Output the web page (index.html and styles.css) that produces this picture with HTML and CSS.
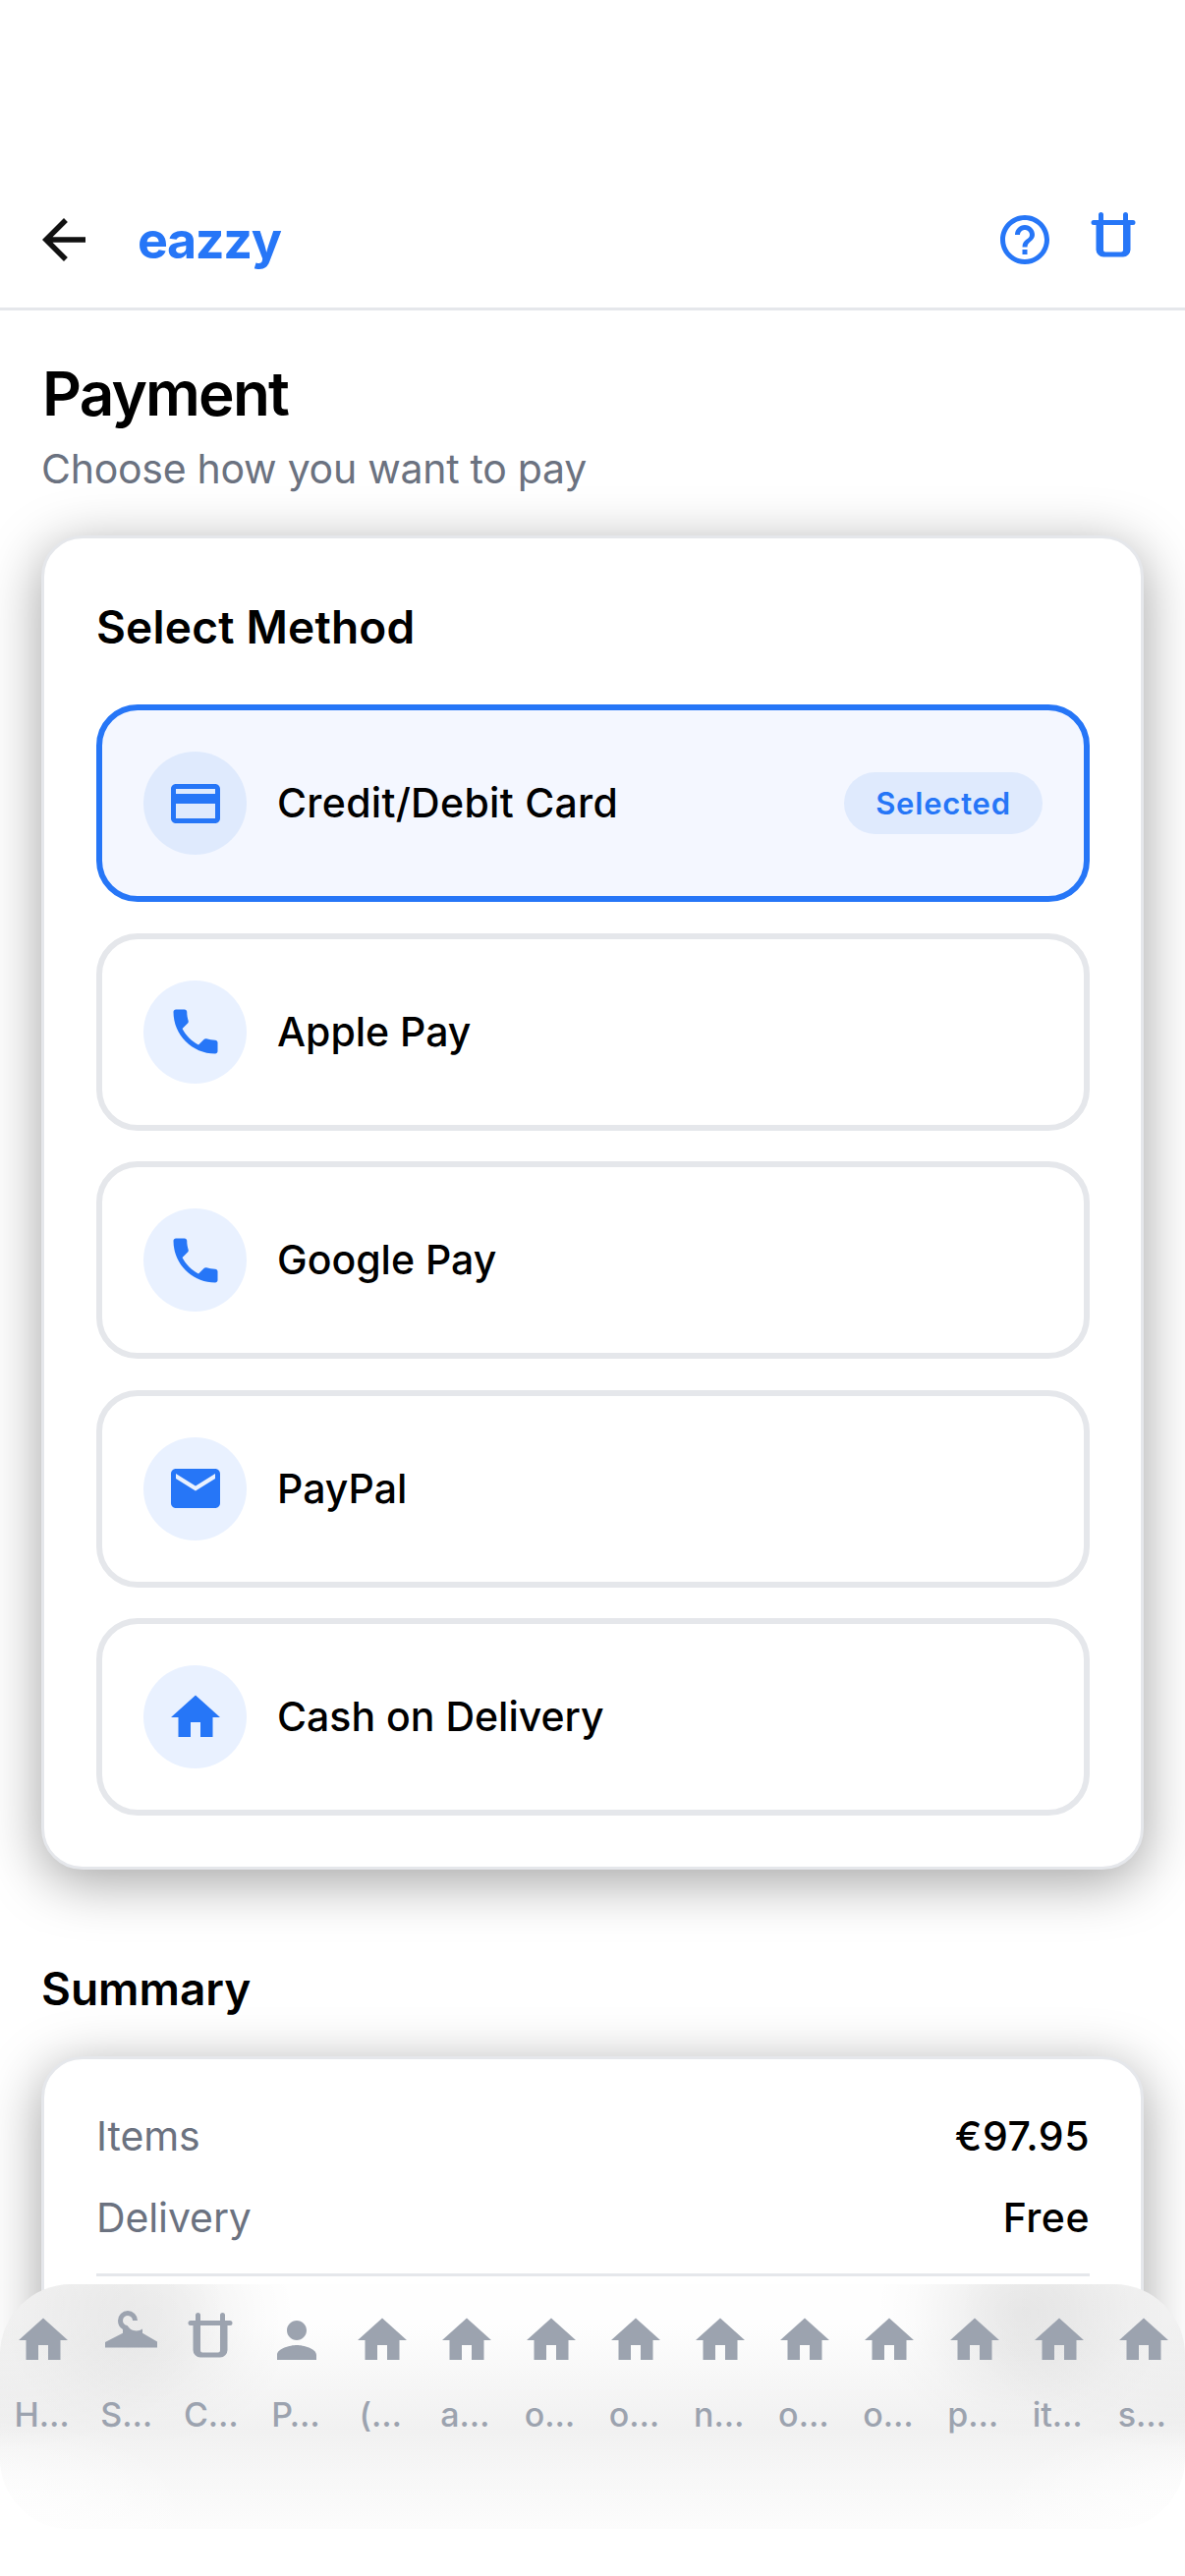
FILE: index.html
```html
<!DOCTYPE html>
<html lang="en">
<head>
<meta charset="utf-8">
<title>Payment – eazzy</title>
<link rel="stylesheet" href="styles.css">
</head>
<body>
<svg class="sprite" aria-hidden="true">
  <symbol id="home" viewBox="0 0 24 24"><path d="M10 20v-6h4v6h5v-8h3L12 3 2 12h3v8z"/></symbol>
  <symbol id="phone" viewBox="0 0 24 24"><path d="M6.62 10.79c1.44 2.83 3.76 5.14 6.59 6.59l2.2-2.2c.27-.27.67-.36 1.02-.24 1.12.37 2.33.57 3.57.57.55 0 1 .45 1 1V20c0 .55-.45 1-1 1-9.39 0-17-7.61-17-17 0-.55.45-1 1-1h3.5c.55 0 1 .45 1 1 0 1.25.2 2.45.57 3.57.11.35.03.74-.25 1.02l-2.2 2.2z"/></symbol>
  <symbol id="mail" viewBox="0 0 24 24"><path d="M20 4H4c-1.1 0-1.99.9-1.99 2L2 18c0 1.1.9 2 2 2h16c1.1 0 2-.9 2-2V6c0-1.1-.9-2-2-2zm0 4l-8 5-8-5V6l8 5 8-5v2z"/></symbol>
  <symbol id="card" viewBox="0 0 24 24"><path d="M20 4H4c-1.11 0-1.99.89-1.99 2L2 18c0 1.11.89 2 2 2h16c1.11 0 2-.89 2-2V6c0-1.11-.89-2-2-2zm0 14H4v-6h16v6zm0-10H4V6h16v2z"/></symbol>
  <symbol id="person" viewBox="0 0 24 24"><path d="M12 12c2.21 0 4-1.79 4-4s-1.79-4-4-4-4 1.79-4 4 1.79 4 4 4zm0 2c-2.67 0-8 1.34-8 4v2h16v-2c0-2.66-5.33-4-8-4z"/></symbol>
  <symbol id="help" viewBox="0 0 24 24"><path d="M11 18h2v-2h-2v2zm1-16C6.48 2 2 6.48 2 12s4.480 10 10 10 10-4.480 10-10S17.520 2 12 2zm0 18c-4.410 0-8-3.590-8-8s3.590-8 8-8 8 3.590 8 8-3.590 8-8 8zm0-14c-2.210 0-4 1.790-4 4h2c0-1.100.9-2 2-2s2 .9 2 2c0 2-3 1.750-3 5h2c0-2.250 3-2.500 3-5 0-2.210-1.790-4-4-4z"/></symbol>
  <symbol id="back" viewBox="0 0 24 24"><path d="M20 11H7.83l5.59-5.59L12 4l-8 8 8 8 1.41-1.41L7.83 13H20v-2z"/></symbol>
  <symbol id="bag" viewBox="0 0 60 60"><path fill-rule="evenodd" d="M15 4.500a2.500 2.500 0 0 1 5 0V10H40V4.500a2.500 2.500 0 0 1 5 0V10H50a2.500 2.500 0 0 1 0 5H47.500V40a7.500 7.500 0 0 1-7.500 7.500H20a7.500 7.500 0 0 1-7.500-7.500V15H10a2.500 2.500 0 0 1 0-5H15zM20 15V40.500a2 2 0 0 0 2 2H38a2 2 0 0 0 2-2V15z"/></symbol>
  <symbol id="hanger" viewBox="0 0 60 60"><path d="M7 37.500V32L25 22.700V19C21.500 17 20 14 20 10A10 10 0 0 1 40 10H35A5 5 0 1 0 29.500 15C31.500 18 34 20 37 20.300C40 20.600 43 20 45 18.500V22.700L60 31.500V37.500z"/></symbol>
</svg>

<div class="screen">
  <header class="topbar">
    <svg class="back"><use href="#back"/></svg>
    <span class="brand">eazzy</span>
    <div class="actions">
      <svg class="icon"><use href="#help"/></svg>
      <svg class="icon"><use href="#bag"/></svg>
    </div>
  </header>

  <main class="content">
    <h1 class="title">Payment</h1>
    <p class="subtitle">Choose how you want to pay</p>

    <section class="panel methods">
      <h2 class="heading">Select Method</h2>
      <div class="list">
        <div class="method selected">
          <span class="bubble"><svg class="icon"><use href="#card"/></svg></span>
          <span class="name">Credit/Debit Card</span>
          <span class="badge">Selected</span>
        </div>
        <div class="method">
          <span class="bubble"><svg class="icon"><use href="#phone"/></svg></span>
          <span class="name">Apple Pay</span>
        </div>
        <div class="method">
          <span class="bubble"><svg class="icon"><use href="#phone"/></svg></span>
          <span class="name">Google Pay</span>
        </div>
        <div class="method">
          <span class="bubble"><svg class="icon"><use href="#mail"/></svg></span>
          <span class="name">PayPal</span>
        </div>
        <div class="method">
          <span class="bubble"><svg class="icon"><use href="#home"/></svg></span>
          <span class="name">Cash on Delivery</span>
        </div>
      </div>
    </section>

    <h2 class="heading summary-title">Summary</h2>
    <section class="panel summary">
      <div class="line"><span class="label">Items</span><span class="value">€97.95</span></div>
      <div class="line"><span class="label">Delivery</span><span class="value">Free</span></div>
      <hr class="rule">
    </section>
  </main>

  <nav class="tabs">
    <div class="tab"><svg class="icon"><use href="#home"/></svg><span>H…</span></div>
    <div class="tab"><svg class="icon"><use href="#hanger"/></svg><span>S…</span></div>
    <div class="tab"><svg class="icon bag"><use href="#bag"/></svg><span>C…</span></div>
    <div class="tab"><svg class="icon"><use href="#person"/></svg><span>P…</span></div>
    <div class="tab"><svg class="icon"><use href="#home"/></svg><span>(…</span></div>
    <div class="tab"><svg class="icon"><use href="#home"/></svg><span>a…</span></div>
    <div class="tab"><svg class="icon"><use href="#home"/></svg><span>o…</span></div>
    <div class="tab"><svg class="icon"><use href="#home"/></svg><span>o…</span></div>
    <div class="tab"><svg class="icon"><use href="#home"/></svg><span>n…</span></div>
    <div class="tab"><svg class="icon"><use href="#home"/></svg><span>o…</span></div>
    <div class="tab"><svg class="icon"><use href="#home"/></svg><span>o…</span></div>
    <div class="tab"><svg class="icon"><use href="#home"/></svg><span>p…</span></div>
    <div class="tab"><svg class="icon"><use href="#home"/></svg><span>it…</span></div>
    <div class="tab"><svg class="icon"><use href="#home"/></svg><span>s…</span></div>
  </nav>
</div>
</body>
</html>
```
FILE: styles.css
```css
* { box-sizing: border-box; margin: 0; padding: 0; }

body {
  background: #fff;
  color: #000;
  font-family: Inter, "Liberation Sans", sans-serif;
}

svg { fill: currentColor; display: block; flex: none; }
.sprite { position: absolute; width: 0; height: 0; }
.icon { width: 60px; height: 60px; }

.screen {
  position: relative;
  width: 1206px;
  height: 2622px;
  overflow: hidden;
  display: flex;
  flex-direction: column;
}

/* Header */
.topbar {
  flex: none;
  height: 316px;
  padding: 175px 43px 0 32px;
  border-bottom: 3px solid #e5e7eb;
  display: flex;
  align-items: center;
  color: #2676f7;
}
.back { width: 66px; height: 66px; color: #111; }
.brand {
  margin-left: 42px;
  padding-top: 1px;
  font-size: 52px;
  line-height: 64px;
  font-weight: 700;
  letter-spacing: -1.4px;
}
.actions { margin-left: auto; display: flex; gap: 30px; }

/* Content */
.content {
  flex: none;
  display: flex;
  flex-direction: column;
  padding: 0 42px;
}
.title {
  margin-top: 45px;
  padding-left: 1px;
  font-size: 62px;
  line-height: 80px;
  font-weight: 600;
  letter-spacing: -1.8px;
}
.subtitle {
  margin-top: 10px;
  font-size: 41px;
  line-height: 52px;
  letter-spacing: -0.27px;
  color: #6b7280;
}
.panel {
  background: #fff;
  border: 3px solid #e5e7eb;
  border-radius: 42px;
  box-shadow: 0 12px 56px rgba(0, 0, 0, 0.37);
  padding: 52.5px 52px 52.5px 53px;
}
.methods { margin-top: 42px; height: 1358px; }
.heading {
  font-size: 46px;
  line-height: 60px;
  font-weight: 600;
  letter-spacing: 0.2px;
}
.methods .heading { margin-top: 7px; }
.list { margin-top: 49.5px; display: flex; flex-direction: column; gap: 31.5px; }
.method {
  height: 201px;
  padding: 0 42px;
  border: 6px solid #e5e7eb;
  border-radius: 42px;
  display: flex;
  align-items: center;
}
.bubble {
  width: 105px;
  height: 105px;
  border-radius: 50%;
  background: #e9f1ff;
  color: #2676f7;
  display: grid;
  place-items: center;
}
.name {
  margin: -1px 0 0 31px;
  font-size: 41px;
  line-height: 52px;
  font-weight: 500;
}
.selected { border-color: #2676f7; background: #f4f7ff; }
.selected .name { letter-spacing: 0.3px; }
.selected .bubble, .badge { background: #dfeafd; }
.badge {
  margin-left: auto;
  width: 202px;
  height: 63px;
  border-radius: 31.5px;
  color: #2676f7;
  font-size: 31px;
  line-height: 63px;
  font-weight: 600;
  text-align: center;
  letter-spacing: 0.8px;
}

.summary-title { margin-top: 91px; letter-spacing: 0; }
.summary { margin-top: 39px; height: 350px; padding-top: 51.5px; }
.line {
  display: flex;
  justify-content: space-between;
  height: 83px;
  font-size: 41px;
  line-height: 52px;
}
.label { color: #6b7280; letter-spacing: -0.1px; }
.value { font-weight: 500; letter-spacing: 0.5px; }
.rule { border: 0; height: 3px; background: #e5e7eb; }

/* Floating tab bar */
.tabs {
  position: absolute;
  left: 0;
  top: 2325px;
  width: 1206px;
  height: 249px;
  padding: 27px 0 0 1px;
  border-radius: 72px;
  display: grid;
  grid-template-columns: repeat(14, 86.143px);
  align-items: start;
  color: #9ca3af;
  background:
    radial-gradient(ellipse 200px 110px at 0 249px, rgba(254, 254, 254, 0.75) 30%, rgba(254, 254, 254, 0)),
    radial-gradient(ellipse 200px 110px at 1206px 249px, rgba(254, 254, 254, 0.75) 30%, rgba(254, 254, 254, 0)),
    radial-gradient(ellipse 150px 130px at 152px 35px, rgba(0, 0, 0, 0.06), rgba(0, 0, 0, 0.048) 30%, rgba(0, 0, 0, 0.01) 75%, transparent),
    radial-gradient(ellipse 150px 130px at 1040px 30px, rgba(0, 0, 0, 0.08), rgba(0, 0, 0, 0.06) 30%, rgba(0, 0, 0, 0.01) 75%, transparent),
    radial-gradient(ellipse 230px 150px at 0 20px, rgba(0, 0, 0, 0.05) 20%, transparent),
    radial-gradient(ellipse 230px 150px at 1206px 20px, rgba(0, 0, 0, 0.05) 20%, transparent),
    linear-gradient(#fefefe 0, #fefefe 40px, #f5f5f5 110px, #f1f1f1 150px, #f7f7f7 195px, #fcfcfc 249px);
}
.tab {
  display: flex;
  flex-direction: column;
  align-items: center;
  font-size: 34px;
  line-height: 44px;
  font-weight: 500;
}
.tab span { margin: 24px 3px 0 0; white-space: nowrap; }
.tab .bag { margin-right: 5px; }
```
